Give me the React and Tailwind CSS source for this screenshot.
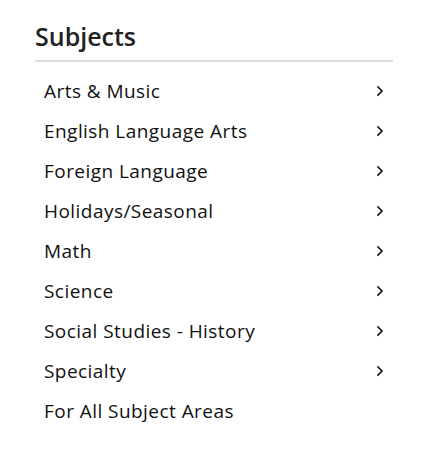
import React from "react";

const subjects = [
  { name: "Arts & Music", sub: true },
  { name: "English Language Arts", sub: true },
  { name: "Foreign Language", sub: true },
  { name: "Holidays/Seasonal", sub: true },
  { name: "Math", sub: true },
  { name: "Science", sub: true },
  { name: "Social Studies - History", sub: true },
  { name: "Specialty", sub: true },
  { name: "For All Subject Areas", sub: false },
];

const Chevron = () => (
  <svg width="8" height="12" viewBox="0 0 8 12" fill="none">
    <path d="M2 2l4 4-4 4" stroke="#111" strokeWidth="1.6" strokeLinecap="square" />
  </svg>
);

const App = () => {
  return (
    <div className="w-[441px] h-[451px] bg-white pt-[20px] pl-[35px]" style={{ fontFamily: "'Open Sans', sans-serif" }}>
      <div className="w-[358px]">
        <h2 className="text-[25px] leading-[32px] font-semibold text-[#222] pb-[8px] border-b-2 border-[#dddddd]">
          Subjects
        </h2>
        <ul className="pt-[9px]">
          {subjects.map((s) => (
            <li key={s.name} className="h-[40px] flex items-center justify-between pl-[9px] pr-[9px] text-[19px] tracking-[0.45px] text-[#111]">
              <span>{s.name}</span>
              {s.sub && <Chevron />}
            </li>
          ))}
        </ul>
      </div>
    </div>
  );
};

export default App;
